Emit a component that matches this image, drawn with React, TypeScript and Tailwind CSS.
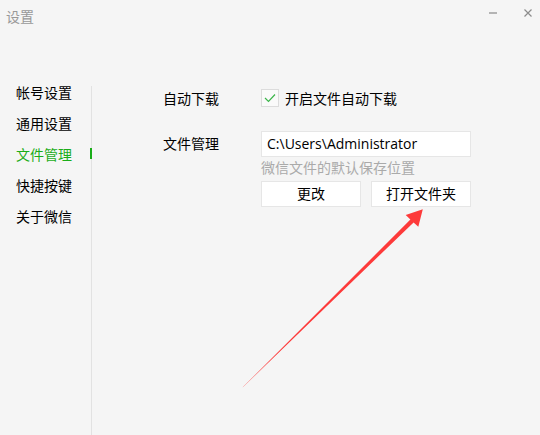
const menu = ["帐号设置", "通用设置", "文件管理", "快捷按键", "关于微信"];

function MinimizeIcon() {
  return (
    <svg width="8" height="2" viewBox="0 0 8 2">
      <rect width="8" height="2" fill="#b4b4b4" />
    </svg>
  );
}

function CloseIcon() {
  return (
    <svg width="8" height="8" viewBox="0 0 8 8">
      <path d="M0.5 0.5 L7.5 7.5 M7.5 0.5 L0.5 7.5" stroke="#8c8c8c" strokeWidth="1.2" />
    </svg>
  );
}

function Arrow() {
  // red annotation arrow drawn over the window
  return (
    <svg className="pointer-events-none absolute left-0 top-0" width="540" height="435" viewBox="0 0 540 435">
      <polygon
        points="242.6,387.4 243.4,386.6 410.4,219.6 405.7,215 422.8,209.2 418.3,226.7 413.6,222.4"
        fill="#fd3a3a"
      />
    </svg>
  );
}

export default function App() {
  const active = 2;

  return (
    <div className="relative flex h-[435px] w-[540px] flex-col overflow-hidden bg-[#f5f5f5] font-['Open_Sans','Noto_Sans_CJK_SC',sans-serif] text-[14px] text-black">
      <div className="flex h-[35px] items-start">
        <span className="ml-[6px] mt-[7px] leading-[20px] text-[#999]">设置</span>
        <div className="ml-auto mr-[8px] mt-[9px] flex items-start gap-[27px]">
          <span className="mt-[3px] flex"><MinimizeIcon /></span>
          <span className="flex"><CloseIcon /></span>
        </div>
      </div>

      <div className="mt-[42px] flex flex-1">
        <ul className="w-[91px] pl-[16px]">
          {menu.map((item, i) => (
            <li
              key={item}
              className={`h-[31px] leading-[31px] ${i === active ? "text-[#1aad19]" : ""}`}
            >
              {item}
            </li>
          ))}
        </ul>

        <div className="relative mt-[9px] w-px bg-[#e2e2e2]">
          <span className="absolute left-[-1px] top-[62px] h-[11px] w-[2px] bg-[#1aad19]" />
        </div>

        <div className="flex flex-col pl-[71px] pt-[12px]">
          <div className="flex h-[18px] items-center">
            <span className="w-[98px]">自动下载</span>
            <span className="flex h-[18px] w-[18px] items-center justify-center border border-[#dcdcdc] bg-[#fafafa]">
              <svg width="12" height="10" viewBox="0 0 12 10">
                <path d="M1 5 L4.5 8.5 L11 1.5" fill="none" stroke="#3bb54a" strokeWidth="1.2" />
              </svg>
            </span>
            <span className="ml-[6px]">开启文件自动下载</span>
          </div>

          <div className="mt-[24px] flex">
            <span className="w-[98px] leading-[26px]">文件管理</span>
            <div className="flex flex-col">
              <div className="h-[26px] w-[210px] border border-[#e6e6e6] bg-white pl-[5px] leading-[24px]">
                {"C:\\Users\\Administrator"}
              </div>
              <span className="mt-[1px] leading-[20px] text-[#aaa]">微信文件的默认保存位置</span>
              <div className="mt-[3px] flex gap-[10px]">
                <button type="button" className="h-[26px] w-[100px] border border-[#e6e6e6] bg-white leading-[24px]">
                  更改
                </button>
                <button type="button" className="h-[26px] w-[100px] border border-[#e6e6e6] bg-white leading-[24px]">
                  打开文件夹
                </button>
              </div>
            </div>
          </div>
        </div>
      </div>

      <Arrow />
    </div>
  );
}
